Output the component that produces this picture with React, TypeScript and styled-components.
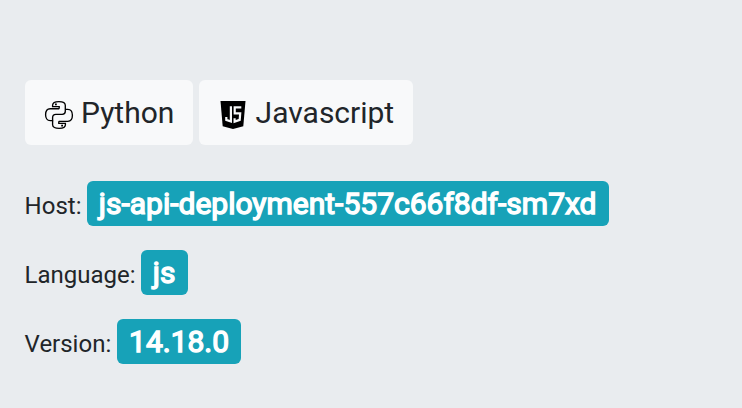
import React from "react";
import styled, { createGlobalStyle } from "styled-components";

const GlobalStyle = createGlobalStyle`
  *, *::before, *::after { box-sizing: border-box; }
  body {
    margin: 0;
    min-height: 100vh;
    background: #e9ecef;
    color: #212529;
    font-family: Roboto, "Liberation Sans", sans-serif;
    font-size: 24px;
  }
`;

const Page = styled.main`
  display: flex;
  flex-direction: column;
  align-items: flex-start;
  padding: 80px 25px 0;
`;

const Toolbar = styled.div`
  display: flex;
  gap: 6px;
  margin-bottom: 36px;
`;

const LanguageButton = styled.button<{ $width: number; $gap: number }>`
  display: flex;
  align-items: center;
  gap: ${({ $gap }) => $gap}px;
  width: ${({ $width }) => $width}px;
  height: 65px;
  padding: 0 0 0 19px;
  border: 0;
  border-radius: 6px;
  background: #f8f9fa;
  color: #212529;
  font: 400 30px/45px Roboto, "Liberation Sans", sans-serif;
  white-space: nowrap;
`;

const Icon = styled.svg`
  flex: none;
  width: 30px;
  height: 30px;
  margin-top: 5px;
`;

const InfoRow = styled.div<{ $gap: number }>`
  display: flex;
  align-items: center;
  gap: ${({ $gap }) => $gap}px;
  height: 45px;
  margin-bottom: 24px;
`;

const Label = styled.span`
  padding-top: 4px;
  line-height: 36px;
  white-space: nowrap;
  margin-left: -0.4px;
`;

const Badge = styled.span<{ $width: number }>`
  width: ${({ $width }) => $width}px;
  height: 45px;
  padding-left: 12px;
  border-radius: 6px;
  background: #17a2b8;
  color: #fff;
  font-size: 30px;
  line-height: 46px;
  white-space: nowrap;
  -webkit-text-stroke: 1.4px #fff;
`;

const PythonIcon = () => (
  <Icon viewBox="0 0 30 30" fill="none" stroke="#000" strokeWidth="1.35">
    <path d="M15.2 8.7V6.6H8.6V5.2C8.6 2.8 11 1.6 14.9 1.6s6.4 1.2 6.4 3.6v6.1c0 2-1.2 3.1-3.1 3.1h-6.3c-2 0-3.3 1.4-3.3 3.3v2.9H6.2c-3.1 0-4.6-2.4-4.6-5.9s1.5-6 4.6-6h9" />
    <path d="M14.8 21.3v2.1h6.6v1.4c0 2.4-2.4 3.6-6.3 3.6s-6.5-1.2-6.5-3.6v-4.2M21.3 9.4h2.5c3.1 0 4.6 2.4 4.6 5.9s-1.5 6-4.6 6h-9" />
    <path d="M11 3.5h1.8v1.8H11zM17.2 24.7H19v1.8h-1.8z" fill="#000" stroke="none" />
  </Icon>
);

const JavascriptIcon = () => (
  <Icon viewBox="0 0 30 30">
    <path fill="#000" d="M2.5 1h25l-2.2 25.2L15 29 4.7 26.2z" />
    <path
      fill="none"
      stroke="#f8f9fa"
      strokeWidth="2.2"
      d="M12.9 6.3v15.2L8.3 19.9V17M23.3 7.4h-6.6v6h5.5l-.5 6.5-5.1 1.7v-3.4"
    />
  </Icon>
);

const details = [
  { label: "Host:", value: "js-api-deployment-557c66f8df-sm7xd", width: 522, gap: 5.3 },
  { label: "Language:", value: "js", width: 47, gap: 5.2 },
  { label: "Version:", value: "14.18.0", width: 124, gap: 5.8 },
];

export default function App() {
  return (
    <>
      <GlobalStyle />
      <Page>
        <Toolbar>
          <LanguageButton $width={168} $gap={7}>
            <PythonIcon />
            Python
          </LanguageButton>
          <LanguageButton $width={214} $gap={7.6}>
            <JavascriptIcon />
            Javascript
          </LanguageButton>
        </Toolbar>
        {details.map(({ label, value, width, gap }) => (
          <InfoRow key={label} $gap={gap}>
            <Label>{label}</Label>
            <Badge $width={width}>{value}</Badge>
          </InfoRow>
        ))}
      </Page>
    </>
  );
}
